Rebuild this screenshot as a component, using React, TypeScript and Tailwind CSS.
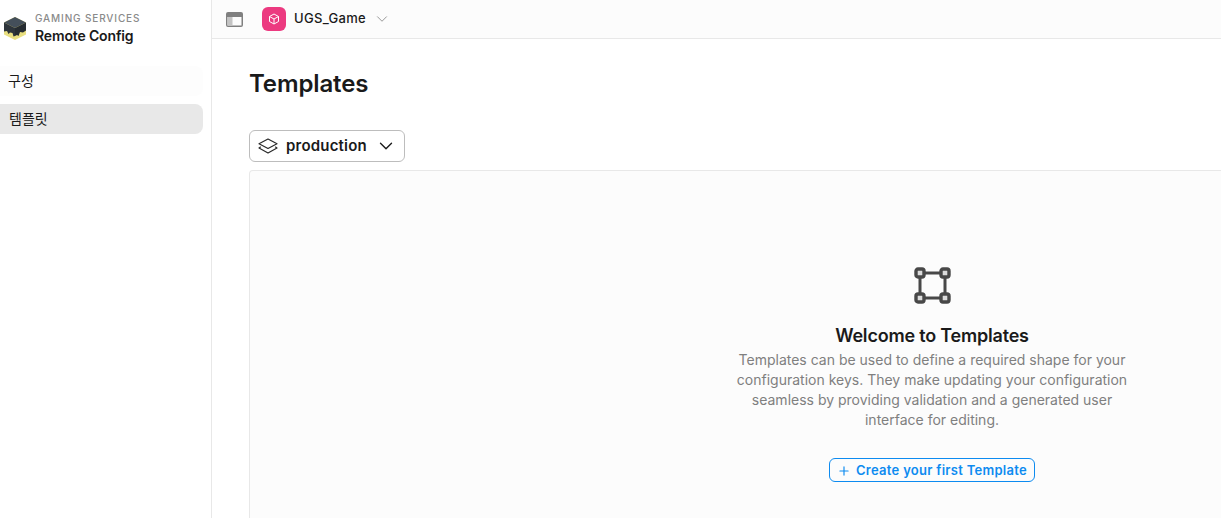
import React from 'react';
import { ChevronDown, Plus } from 'lucide-react';

const FONT = 'font-["Inter","Noto_Sans_CJK_KR",sans-serif]';

function CubeLogo() {
  return (
    <svg width="22" height="23" viewBox="0 0 22 23" className="-mt-[1px] shrink-0">
      <path d="M11 0 L22 5.5 V17.5 L11 23 L0 17.5 V5.5 Z" fill="#e9df80" />
      <path d="M11 0 L22 5.5 L11 11 L0 5.5 Z" fill="#444f5a" />
      <path d="M0 5.5 L11 11 V19 L9.5 19.5 L8.5 16 L6 15.5 L4.5 17 L3 14 L0 14.5 Z" fill="#2e353b" />
      <path d="M22 5.5 L11 11 V19 L13 18 L14.5 19 L16 15 L19 15.5 L22 13.5 Z" fill="#262c31" />
    </svg>
  );
}

function TemplatesIcon() {
  return (
    <svg width="37" height="37" viewBox="0 0 37 37" fill="none" stroke="#484848">
      <path d="M6 6 H31 V31 H6 Z" strokeWidth="3" />
      {[[6, 6], [31, 6], [6, 31], [31, 31]].map(([x, y]) => (
        <rect key={`${x}-${y}`} x={x - 4} y={y - 4} width="8" height="8" rx="2" fill="#dcdcdc" strokeWidth="3.4" />
      ))}
    </svg>
  );
}

function LayersFlat() {
  return (
    <svg width="20" height="16" viewBox="0 0 20 16" fill="none" stroke="#2a2a2a" strokeWidth="1.2" strokeLinejoin="round" className="shrink-0">
      <path d="M10 1 L19 5.8 L10 10.5 L1 5.8 Z" />
      <path d="M2.8 8.8 L1 10 L10 15 L19 10 L17.2 8.8" />
    </svg>
  );
}

function Sidebar() {
  return (
    <aside className="flex w-[212px] shrink-0 flex-col border-r border-[#e8e8e8] bg-white">
      <div className="flex items-center gap-[9px] pt-[12px] pl-1">
        <CubeLogo />
        <div className="flex flex-col">
          <span className="text-[10px] leading-[12px] font-medium tracking-[0.87px] text-[#8a8a8a]">GAMING SERVICES</span>
          <span className="mt-[3px] text-[14px] leading-[18px] font-semibold tracking-[-0.15px] text-[#1a1a1a]">Remote Config</span>
        </div>
      </div>
      <nav className="mt-[21px] flex flex-col gap-[8px] pr-2">
        <div className="flex h-[30px] items-center rounded-r-lg bg-[#fdfdfd] pb-[2px] pl-2 text-[14px] text-[#1a1a1a]">구성</div>
        <div className="flex h-[30px] items-center rounded-r-lg bg-[#e8e8e8] pb-[2px] pl-[9px] text-[14px] text-[#1a1a1a]">템플릿</div>
      </nav>
    </aside>
  );
}

function TopBar() {
  return (
    <header className="flex h-[39px] shrink-0 items-center border-b border-[#e8e8e8] bg-[#fcfcfc] pl-[14px]">
      <svg width="17" height="15" viewBox="0 0 17 15" className="shrink-0">
        <rect x="0" y="0" width="17" height="15" rx="2" fill="#808080" />
        <rect x="1.5" y="5" width="14" height="8.5" fill="#fcfcfc" />
        <rect x="1.5" y="5" width="5" height="8.5" fill="#c4c4c4" />
      </svg>
      <div className="ml-[19px] flex h-6 w-6 items-center justify-center rounded-md bg-[#ec3a80]">
        <svg width="12" height="12" viewBox="0 0 24 24" fill="none" stroke="white" strokeWidth="2">
          <path d="M12 2 L21 7 V17 L12 22 L3 17 V7 Z M3 7 L12 12 L21 7 M12 12 V22" />
        </svg>
      </div>
      <span className="ml-2 text-[13px] font-medium tracking-[0.3px] text-[#1a1a1a]">UGS_Game</span>
      <ChevronDown className="ml-[7px] text-[#777777]" size={18} strokeWidth={1} />
    </header>
  );
}

function EmptyState() {
  return (
    <div className="mt-2 w-[1366px] flex-1 rounded-t border border-b-0 border-[#e8e8e8] bg-[#fcfcfc] pt-[96px]">
      <div className="flex flex-col items-center">
        <TemplatesIcon />
        <h2 className="mt-[20px] text-[18px] leading-[24px] font-semibold tracking-[-0.2px] text-[#1a1a1a]">Welcome to Templates</h2>
        <p className="mt-[2px] w-[420px] text-center text-[14px] leading-[20px] text-[#7f7f7f]">
          Templates can be used to define a required shape for your configuration keys. They make updating your configuration seamless by providing validation and a generated user interface for editing.
        </p>
        <button className="mt-[28px] flex h-6 items-center gap-[5px] rounded-md border border-[#0d8bf0] px-[7px] pt-[1px] text-[13px] font-semibold tracking-[0.28px] text-[#0d8bf0]">
          <Plus size={14} strokeWidth={2} />
          Create your first Template
        </button>
      </div>
    </div>
  );
}

export default function App() {
  return (
    <div className={`flex h-[518px] w-[1221px] overflow-hidden bg-white ${FONT}`}>
      <Sidebar />
      <main className="flex min-w-0 flex-1 flex-col">
        <TopBar />
        <div className="flex flex-1 flex-col pl-[37px]">
          <h1 className="mt-[29px] text-[24px] leading-[32px] font-semibold tracking-[-0.12px] text-[#1a1a1a]">Templates</h1>
          <button className="mt-[30px] flex h-8 w-[156px] shrink-0 items-center rounded-md border border-[#bdbdbd] bg-white pl-[8px] text-[15px] font-semibold text-[#1a1a1a]">
            <LayersFlat />
            <span className="ml-[8px] tracking-[0.2px]">production</span>
            <ChevronDown className="ml-[8px]" size={22} strokeWidth={1.5} />
          </button>
          <EmptyState />
        </div>
      </main>
    </div>
  );
}
